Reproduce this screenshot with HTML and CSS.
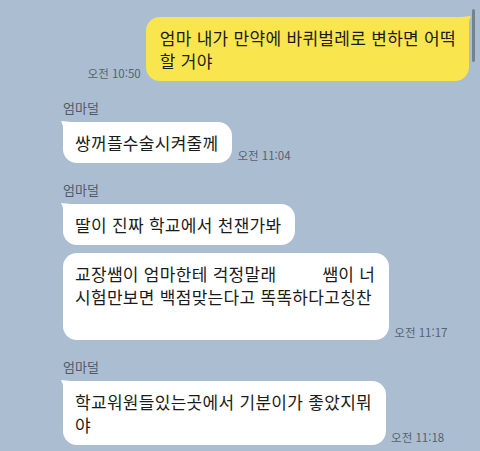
FILE: index.html
```html
<!DOCTYPE html>
<html lang="ko">
<head>
  <meta charset="UTF-8" />
  <meta name="viewport" content="width=device-width, initial-scale=1.0"/>
  <title>엄마덜</title>
  <link rel="stylesheet" href="styles.css">
</head>
<body>

  <div class="chat">
    <div class="row mine">
      <span class="time">오전 10:50</span>
      <div class="bubble yellow">엄마 내가 만약에 바퀴벌레로 변하면 어떡<br>할 거야</div>
    </div>

    <div class="group">
      <div class="name">엄마덜</div>
      <div class="row">
        <div class="bubble white tail">쌍꺼플수술시켜줄께</div>
        <span class="time">오전 11:04</span>
      </div>
    </div>

    <div class="group">
      <div class="name">엄마덜</div>
      <div class="row">
        <div class="bubble white tail">딸이 진짜 학교에서 천잰가봐</div>
      </div>
      <div class="row">
        <div class="bubble white">교장쌤이 엄마한테 걱정말래<span class="blank"></span>쌤이 너<br>시험만보면 백점맞는다고 똑똑하다고칭찬<br>&nbsp;</div>
        <span class="time">오전 11:17</span>
      </div>
    </div>

    <div class="group">
      <div class="name">엄마덜</div>
      <div class="row">
        <div class="bubble white tail">학교워원들있는곳에서 기분이가 좋았지뭐<br>야</div>
        <span class="time">오전 11:18</span>
      </div>
    </div>
  </div>

  <div class="scrollbar"></div>

</body>
</html>
```

FILE: styles.css
```css
body {
  font-family: "Noto Sans CJK KR", "Noto Sans", sans-serif;
  background-color: #abbed1;
  margin: 0;
  width: 480px;
  height: 451px;
  overflow: hidden;
  position: relative;
}

.chat {
  padding: 17px 11px 0 63px;
}

.row {
  display: flex;
  align-items: flex-end;
  gap: 5px;
  margin-bottom: 8px;
}

.row.mine {
  justify-content: flex-end;
  margin-bottom: 0;
}

.group {
  margin-top: 18px;
}

.name {
  font-size: 13px;
  line-height: 18px;
  color: #4f5a66;
  margin-bottom: 5px;
}

.bubble {
  position: relative;
  font-size: 17px;
  letter-spacing: 0.3px;
  line-height: 23px;
  color: #1b1b1b;
  padding: 9px 14px 9px 12px;
  border-radius: 14px;
  white-space: nowrap;
}

.white {
  background-color: #ffffff;
}

.yellow {
  background-color: #f9e54e;
  padding: 9px 13px 9px 14px;
  border-top-right-radius: 3px;
}

.tail {
  border-top-left-radius: 3px;
}

.tail::before {
  content: "";
  position: absolute;
  left: -2px;
  top: -1px;
  width: 10px;
  height: 12px;
  background-color: #ffffff;
  clip-path: polygon(0 0, 100% 8%, 100% 100%, 30% 60%);
}

.yellow::before {
  content: "";
  position: absolute;
  right: -2px;
  top: -1px;
  width: 10px;
  height: 12px;
  background-color: #f9e54e;
  clip-path: polygon(100% 0, 0 8%, 0 100%, 70% 60%);
}

.blank {
  display: inline-block;
  width: 46px;
}

.time {
  font-size: 11.5px;
  line-height: 14px;
  color: #55626f;
  white-space: nowrap;
  margin-bottom: 1px;
}

.scrollbar {
  position: absolute;
  right: 5px;
  top: 9px;
  width: 3px;
  height: 53px;
  border-radius: 2px;
  background-color: #75838f;
}
```
